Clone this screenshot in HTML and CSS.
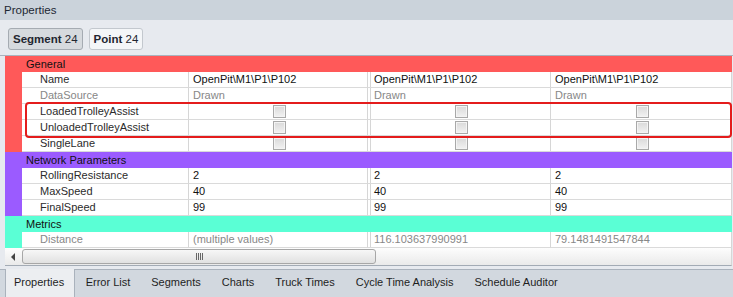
FILE: index.html
```html
<!DOCTYPE html>
<html lang="en">
<head>
  <meta charset="UTF-8" />
  <title>Properties</title>
  <link rel="stylesheet" href="styles.css">
</head>
<body>

<div class="title">Properties</div>

<div class="toolbar">
  <button class="sel-btn active"><b>Segment</b> 24</button>
  <button class="sel-btn"><b>Point</b> 24</button>
</div>

<div class="grid">
  <!-- General -->
  <div class="group general">
    <div class="cat">General</div>
    <div class="row">
      <div class="strip"></div>
      <div class="cell name">Name</div>
      <div class="cell">OpenPit\M1\P1\P102</div>
      <div class="cell c2">OpenPit\M1\P1\P102</div>
      <div class="cell">OpenPit\M1\P1\P102</div>
    </div>
    <div class="row">
      <div class="strip"></div>
      <div class="cell name dim">DataSource</div>
      <div class="cell dim">Drawn</div>
      <div class="cell c2 dim">Drawn</div>
      <div class="cell dim">Drawn</div>
    </div>
    <div class="row">
      <div class="strip"></div>
      <div class="cell name">LoadedTrolleyAssist</div>
      <div class="cell mid"><span class="chk"></span></div>
      <div class="cell c2 mid"><span class="chk"></span></div>
      <div class="cell mid"><span class="chk"></span></div>
    </div>
    <div class="row">
      <div class="strip"></div>
      <div class="cell name">UnloadedTrolleyAssist</div>
      <div class="cell mid"><span class="chk"></span></div>
      <div class="cell c2 mid"><span class="chk"></span></div>
      <div class="cell mid"><span class="chk"></span></div>
    </div>
    <div class="row">
      <div class="strip"></div>
      <div class="cell name">SingleLane</div>
      <div class="cell mid"><span class="chk"></span></div>
      <div class="cell c2 mid"><span class="chk"></span></div>
      <div class="cell mid"><span class="chk"></span></div>
    </div>
  </div>

  <!-- Network Parameters -->
  <div class="group network">
    <div class="cat">Network Parameters</div>
    <div class="row">
      <div class="strip"></div>
      <div class="cell name">RollingResistance</div>
      <div class="cell">2</div>
      <div class="cell c2">2</div>
      <div class="cell">2</div>
    </div>
    <div class="row">
      <div class="strip"></div>
      <div class="cell name">MaxSpeed</div>
      <div class="cell">40</div>
      <div class="cell c2">40</div>
      <div class="cell">40</div>
    </div>
    <div class="row">
      <div class="strip"></div>
      <div class="cell name">FinalSpeed</div>
      <div class="cell">99</div>
      <div class="cell c2">99</div>
      <div class="cell">99</div>
    </div>
  </div>

  <!-- Metrics -->
  <div class="group metrics">
    <div class="cat">Metrics</div>
    <div class="row">
      <div class="strip"></div>
      <div class="cell name dim">Distance</div>
      <div class="cell dim">(multiple values)</div>
      <div class="cell c2 dim">116.103637990991</div>
      <div class="cell dim">79.1481491547844</div>
    </div>
  </div>

  <div class="hscroll">
    <span class="arrow-left"></span>
    <div class="thumb"><span class="grip"></span></div>
  </div>

  <div class="highlight"></div>
</div>

<div class="gap"></div>

<div class="tabs">
  <div class="tab active">Properties</div>
  <div class="tab">Error List</div>
  <div class="tab">Segments</div>
  <div class="tab">Charts</div>
  <div class="tab">Truck Times</div>
  <div class="tab">Cycle Time Analysis</div>
  <div class="tab">Schedule Auditor</div>
</div>

</body>
</html>
```

FILE: styles.css
```css
* {
  box-sizing: border-box;
}

body {
  margin: 0;
  width: 733px;
  height: 297px;
  overflow: hidden;
  background: #e7eaef;
  font-family: 'Liberation Sans', Arial, sans-serif;
  font-size: 11px;
  color: #111;
}

.title {
  height: 20px;
  line-height: 20px;
  padding-left: 4px;
  background: #cbd3db;
  color: #1d2733;
  font-size: 11.5px;
}

.toolbar {
  height: 36px;
  padding: 8px 0 0 8px;
  display: flex;
  gap: 6px;
  border-bottom: 1px solid #a9b3be;
}

.sel-btn {
  height: 22px;
  padding: 0 4px;
  font-family: inherit;
  font-size: 11.5px;
  color: #1f2630;
  background: #f4f6f8;
  border: 1px solid #c3c8ce;
  border-radius: 3px;
}

.sel-btn.active {
  background: #d6dade;
  border-color: #a5abb2;
}

.grid {
  position: relative;
  margin-left: 5px;
  width: 727px;
  background: #fff;
}

.group.general { background: #ff5959; }
.group.network { background: #9b5bff; }
.group.metrics { background: #5affd5; }

.cat {
  height: 16px;
  line-height: 16px;
  padding-left: 21px;
  color: #111;
}

.row {
  display: grid;
  grid-template-columns: 17px 167px 179px 183px 181px;
  height: 16px;
}

.cell {
  background: #fff;
  border-right: 1px solid #d6d6d6;
  border-bottom: 1px solid #dadada;
  padding-left: 4px;
  line-height: 15px;
  white-space: nowrap;
  overflow: hidden;
}

.cell.name {
  padding-left: 18px;
  color: #2b2b2b;
}

.cell.c2 {
  padding-left: 6px;
  background: #fff linear-gradient(#d6d6d6, #d6d6d6) 2px 0 / 1px 100% no-repeat;
}

.dim,
.cell.name.dim {
  color: #878787;
}

.mid {
  display: flex;
  justify-content: center;
  align-items: center;
}

.chk {
  width: 13px;
  height: 13px;
  margin-left: -2px;
  border: 1px solid #a9a9a9;
  background: linear-gradient(#d9d9d9, #f2f2f2);
  box-shadow: inset 0 0 0 1px #f4f4f4;
}

.highlight {
  position: absolute;
  top: 46px;
  left: 20px;
  width: 707px;
  height: 36px;
  border: 2px solid #e41c1c;
  border-radius: 4px;
}

.hscroll {
  height: 18px;
  display: flex;
  align-items: center;
  border-right: 1px solid #d6d6d6;
  background: linear-gradient(#fdfdfd, #eaeaea);
  border-bottom: 1px solid #a3abb5;
}

.arrow-left {
  width: 0;
  height: 0;
  margin: 0 7px 0 6px;
  border-top: 4px solid transparent;
  border-bottom: 4px solid transparent;
  border-right: 4px solid #444;
}

.thumb {
  width: 354px;
  height: 15px;
  border: 1px solid #a7a7a7;
  border-radius: 3px;
  background: linear-gradient(#f7f7f7, #e1e1e1);
  display: flex;
  justify-content: center;
  align-items: center;
}

.grip {
  width: 7px;
  height: 7px;
  background: repeating-linear-gradient(to right, #666 0 1px, transparent 1px 2px);
}

.gap {
  height: 3px;
}

.tabs {
  display: flex;
  height: 28px;
  padding-left: 5px;
  background: #d2d8df;
  border-top: 1px solid #aab2bc;
}

.tab {
  padding: 0 10.5px;
  line-height: 25px;
  color: #1e1e1e;
}

.tab.active {
  margin-top: -1px;
  padding: 1px 10px 0 8px;
  background: #eceef1;
  border-left: 1px solid #aab2bc;
  border-right: 1px solid #aab2bc;
}
```
